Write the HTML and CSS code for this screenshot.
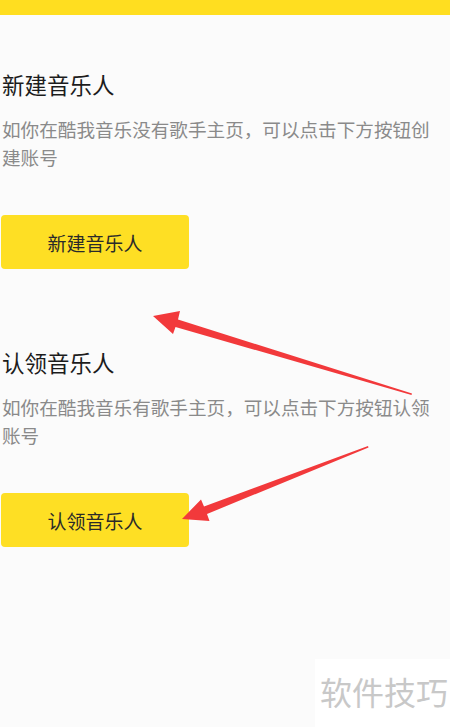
FILE: index.html
```html
<!DOCTYPE html>
<html lang="zh-CN">
<head>
    <meta charset="UTF-8">
    <meta name="viewport" content="width=device-width, initial-scale=1.0">
    <title>音乐人认证</title>
    <link rel="stylesheet" href="styles.css">
</head>
<body>
    <div class="top-bar"></div>
    <div class="container">
        <section class="block">
            <h2 class="title">新建音乐人</h2>
            <p class="desc">如你在酷我音乐没有歌手主页，可以点击下方按钮创建账号</p>
            <button type="button" class="button">新建音乐人</button>
        </section>
        <section class="block second">
            <h2 class="title">认领音乐人</h2>
            <p class="desc">如你在酷我音乐有歌手主页，可以点击下方按钮认领账号</p>
            <button type="button" class="button">认领音乐人</button>
        </section>
    </div>

    <!-- annotation arrows over the page -->
    <svg class="arrows" width="450" height="727" viewBox="0 0 450 727">
        <polygon points="153,316 180,311 178,319.5 412,393.5 411.5,395 175.5,327 173,334" fill="#f2393b"/>
        <polygon points="182,519 201,499.5 204,506.5 368,446 368.5,447.5 207,514 209.5,521" fill="#f2393b"/>
    </svg>

    <div class="watermark">软件技巧</div>
</body>
</html>
```

FILE: styles.css
```css
body {
    font-family: "Noto Sans CJK SC", "Noto Sans", sans-serif;
    background: #fbfbfb;
    margin: 0;
    padding: 0;
    width: 450px;
    height: 727px;
    overflow: hidden;
    position: relative;
}
.top-bar {
    height: 15px;
    background: #ffde20;
}
.container {
    padding: 53px 10px 0 2px;
}
.block {
    display: flex;
    flex-direction: column;
    align-items: flex-start;
}
.second {
    margin-top: 77px;
}
.title {
    margin: 0;
    font-size: 22.5px;
    font-weight: 400;
    line-height: 32px;
    color: #1c1c1c;
}
.desc {
    margin: 15px 0 0 0;
    font-size: 18.6px;
    line-height: 28px;
    color: #8a8a8a;
}
.button {
    margin: 44px 0 0 -1px;
    width: 188px;
    height: 54px;
    background: #fedf24;
    border: none;
    border-radius: 4px;
    color: #2a2a2a;
    font-family: inherit;
    font-size: 19px;
    padding: 0;
}
.arrows {
    position: absolute;
    left: 0;
    top: 0;
}
.watermark {
    position: absolute;
    left: 315px;
    top: 659px;
    width: 135px;
    height: 68px;
    background: #ffffff;
    color: #c8c8c8;
    font-size: 32px;
    line-height: 64px;
    text-align: right;
    padding-right: 2px;
    box-sizing: border-box;
}
```
